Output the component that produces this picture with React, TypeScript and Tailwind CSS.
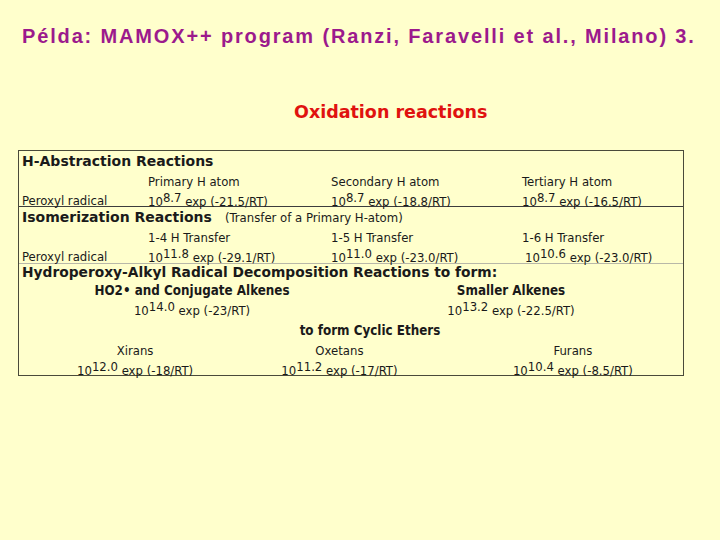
import React from 'react';

const tahoma = { fontFamily: '"DejaVu Sans Condensed", "DejaVu Sans", sans-serif' };
const tahomaBold = { fontFamily: '"DejaVu Sans", sans-serif' };

function Pow({ exp, rest }: { exp: string; rest: string }) {
  return (
    <span className="relative top-[1px] whitespace-nowrap">
      10<span className="relative -top-[4px]">{exp}</span> {rest}
    </span>
  );
}

export default function App() {
  return (
    <div className="h-[540px] w-[720px] bg-[#ffffcc] overflow-hidden">
      <h1 className="pl-[22px] pt-[24px] text-[20px] leading-[24px] font-bold tracking-[1.85px] text-[#9c1a8c] font-['Liberation_Sans',sans-serif]">
        Példa: MAMOX++ program (Ranzi, Faravelli et al., Milano) 3.
      </h1>

      <h2
        className="mt-[54px] pl-[294px] text-[17.5px] leading-[20px] font-bold text-[#e0120f]"
        style={tahomaBold}
      >
        Oxidation reactions
      </h2>

      <div
        className="ml-[18px] mt-[28px] w-[666px] border border-[#4a4a3a] bg-[#ffffcc] text-[13px] leading-[19px] text-[#1a1a1a]"
        style={tahoma}
      >
        {/* H-Abstraction */}
        <div className="border-b border-[#3c3c3c] pl-[3px]">
          <div className="text-[14px] font-bold leading-[21px]" style={tahomaBold}>
            H-Abstraction Reactions
          </div>
          <div className="flex">
            <div className="w-[126px]" />
            <div className="w-[183px]">Primary H atom</div>
            <div className="w-[191px]">Secondary H atom</div>
            <div>Tertiary H atom</div>
          </div>
          <div className="flex h-[15px]">
            <div className="w-[126px]">Peroxyl radical</div>
            <div className="w-[183px]"><Pow exp="8.7" rest="exp (-21.5/RT)" /></div>
            <div className="w-[191px]"><Pow exp="8.7" rest="exp (-18.8/RT)" /></div>
            <div><Pow exp="8.7" rest="exp (-16.5/RT)" /></div>
          </div>
        </div>

        {/* Isomerization */}
        <div className="border-b border-[#b8b8a8] pl-[3px]">
          <div className="flex items-baseline leading-[20px]">
            <span className="w-[203px] text-[14px] font-bold" style={tahomaBold}>
              Isomerization Reactions
            </span>
            <span>(Transfer of a Primary H-atom)</span>
          </div>
          <div className="flex">
            <div className="w-[126px]" />
            <div className="w-[183px]">1-4 H Transfer</div>
            <div className="w-[191px]">1-5 H Transfer</div>
            <div>1-6 H Transfer</div>
          </div>
          <div className="flex h-[16px]">
            <div className="w-[126px]">Peroxyl radical</div>
            <div className="w-[183px]"><Pow exp="11.8" rest="exp (-29.1/RT)" /></div>
            <div className="w-[191px]"><Pow exp="11.0" rest="exp (-23.0/RT)" /></div>
            <div className="pl-[3px]"><Pow exp="10.6" rest="exp (-23.0/RT)" /></div>
          </div>
        </div>

        {/* Decomposition */}
        <div>
          <div className="pl-[3px] text-[13.8px] font-bold leading-[17px]" style={tahomaBold}>
            Hydroperoxy-Alkyl Radical Decomposition Reactions to form:
          </div>
          <div className="flex">
            <div className="w-[346px] text-center">
              <div className="text-[13.3px] font-bold">HO2• and Conjugate Alkenes</div>
              <div><Pow exp="14.0" rest="exp (-23/RT)" /></div>
            </div>
            <div className="w-[292px] text-center">
              <div className="text-[13.3px] font-bold">Smaller Alkenes</div>
              <div><Pow exp="13.2" rest="exp (-22.5/RT)" /></div>
            </div>
          </div>
          <div className="mt-[2px] pl-[38px] text-center text-[13.3px] font-bold">to form Cyclic Ethers</div>
          <div className="mt-[1px] flex">
            <div className="w-[234px] text-center">
              <div>Xirans</div>
              <div className="h-[15px]"><Pow exp="12.0" rest="exp (-18/RT)" /></div>
            </div>
            <div className="w-[178px] text-center">
              <div>Oxetans</div>
              <div className="h-[15px]"><Pow exp="11.2" rest="exp (-17/RT)" /></div>
            </div>
            <div className="ml-[35px] w-[222px] text-center">
              <div>Furans</div>
              <div className="h-[15px]"><Pow exp="10.4" rest="exp (-8.5/RT)" /></div>
            </div>
          </div>
        </div>
      </div>
    </div>
  );
}
